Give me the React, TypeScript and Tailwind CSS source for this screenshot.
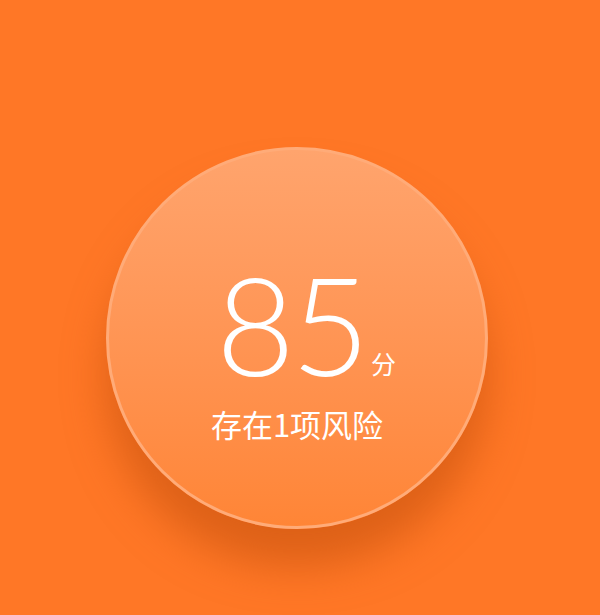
export default function App() {
  return (
    <div className="w-[600px] h-[615px] bg-[#ff7726] overflow-hidden flex justify-center pt-[147px]">
      <div className="relative ml-[-6px] w-[382px] h-[382px] rounded-full border-[3px] border-[#ffab78] bg-gradient-to-b from-[#ffa46d] to-[#ff8536] shadow-[0_38px_40px_rgba(190,75,10,0.5)] flex flex-col items-center">
        <div className="mt-[124px] pl-[18px] flex items-end text-white">
          <span className="font-['Lato',sans-serif] font-light text-[136px] leading-[100px] tracking-[-4px]">
            85
          </span>
          <span className="ml-[5px] mb-[-2px] font-['Noto_Sans_CJK_SC',sans-serif] text-[25px] leading-none">
            分
          </span>
        </div>
        <div className="mt-[34px] text-white font-['Noto_Sans_CJK_SC',sans-serif] text-[31px] leading-none">
          存在1项风险
        </div>
      </div>
    </div>
  );
}
